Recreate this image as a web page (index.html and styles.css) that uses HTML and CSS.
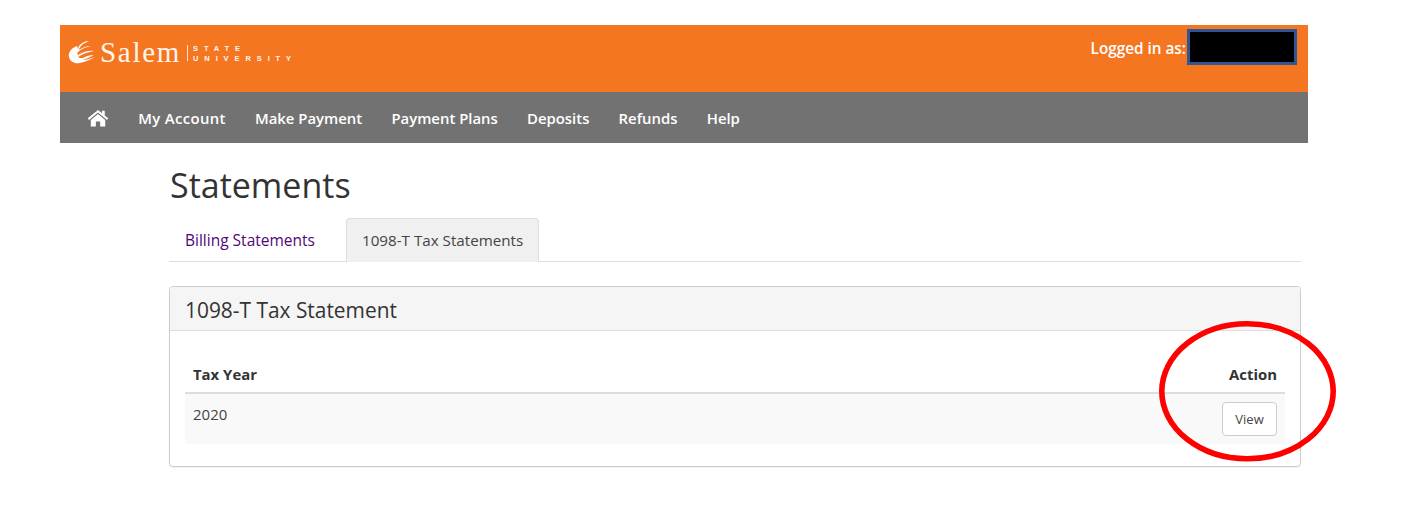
FILE: index.html
```html
<!DOCTYPE html>
<html lang="en">
<head>
<meta charset="utf-8">
<title>Statements</title>
<link rel="stylesheet" href="styles.css">
</head>
<body>
<div class="shell">
  <header class="brandbar">
    <div class="logo">
      <svg class="logo-mark" viewBox="0 0 28 26" aria-hidden="true">
        <path d="M9 7C3 9 0 14 1 18c1 5 6 7 11 6 5-1 10-3 15-6-4 1-8 3-12 3 3-1 7-3 11-5-4 0-8 1-11 3-2 0-4 0-5-1 4-3 10-5 16-6-5-1-11 1-16 4-1-1-1-2 0-3 3-3 8-5 13-6-5 0-9 2-12 4 0-2 2-4 4-6l6-3c-4 0-8 2-10 5-1 1 0 2-1 3z" fill="#fff"/>
      </svg>
      <span class="logo-name">Salem</span>
      <span class="logo-rule"></span>
      <span class="logo-sub"><span>STATE</span><span>UNIVERSITY</span></span>
    </div>
    <div class="login">
      <span>Logged in as:</span>
      <span class="redaction"></span>
    </div>
  </header>
  <nav class="navbar">
    <a class="nav-home" href="#" aria-label="Home">
      <svg viewBox="0 0 24 20" aria-hidden="true">
        <path d="M12 1.2 0.6 10.4l1.4 1.7L12 4l10 8.100 1.400-1.700L19.500 7.200V2h-3v2.800z" fill="#fff"/>
        <path d="M12 5.600 4 12.100V19.500h5.600v-5.500h4.800v5.500H20v-7.400z" fill="#fff"/>
      </svg>
    </a>
    <a class="nav-account" href="#">My Account</a>
    <a href="#">Make Payment</a>
    <a href="#">Payment Plans</a>
    <a href="#">Deposits</a>
    <a href="#">Refunds</a>
    <a href="#">Help</a>
  </nav>
</div>
<main class="content">
  <h1>Statements</h1>
  <ul class="tabs">
    <li><a href="#">Billing Statements</a></li>
    <li class="active"><a href="#">1098-T Tax Statements</a></li>
  </ul>
  <section class="panel">
    <h2 class="panel-title">1098-T Tax Statement</h2>
    <div class="panel-body">
      <table>
        <thead>
          <tr><th>Tax Year</th><th class="right">Action</th></tr>
        </thead>
        <tbody>
          <tr><td>2020</td><td class="right"><button type="button">View</button></td></tr>
        </tbody>
      </table>
    </div>
  </section>
</main>
<svg class="annotation" viewBox="0 0 180 144" aria-hidden="true">
  <ellipse cx="89.500" cy="71.300" rx="85.700" ry="67.500" fill="none" stroke="#f00" stroke-width="5.600"/>
</svg>
</body>
</html>
```
FILE: styles.css
```css
* { box-sizing: border-box; }
html, body { margin: 0; padding: 0; }
body {
  position: relative;
  height: 526px;
  overflow: hidden;
  background: #fff;
  color: #333;
  font-family: "Open Sans", "Noto Sans", "Liberation Sans", sans-serif;
  font-size: 14px;
}
a { text-decoration: none; color: inherit; }
.shell { margin: 25px 96px 0 60px; }
.brandbar {
  height: 67px;
  background: #f57621;
  display: flex;
  justify-content: space-between;
  align-items: flex-start;
  color: #fff;
}
.logo { display: flex; align-items: center; padding: 12px 0 0 8px; }
.logo-mark { width: 28px; height: 26px; }
.logo-name {
  font-family: "Liberation Serif", serif;
  font-size: 29px;
  letter-spacing: 1.700px;
  line-height: 30px;
  margin-left: 4px;
  color: #fff6ee;
}
.logo-rule { width: 1px; height: 16px; background: #fde3d0; margin: 2px 0 0 6px; }
.logo-sub {
  display: flex;
  flex-direction: column;
  font-family: "Liberation Sans", sans-serif;
  font-weight: 700;
  font-size: 7.500px;
  line-height: 10px;
  letter-spacing: 5.900px;
  padding-top: 3px;
  margin-left: 5px;
  color: #fff6ee;
}
.login {
  display: flex;
  align-items: flex-start;
  margin: 7px 11px 0 0;
  font-size: 15.300px;
  font-weight: 600;
  line-height: 32px;
}
.redaction {
  width: 110px;
  height: 36px;
  margin: -3px 0 0 1px;
  background: #000;
  border: 3px solid #2f5597;
}
.navbar {
  height: 51px;
  background: #727273;
  display: flex;
  align-items: center;
  padding-left: 27px;
  gap: 29.200px;
  color: #fff;
  font-size: 14.900px;
  font-weight: 600;
  white-space: nowrap;
}
.nav-home { display: flex; }
.nav-home svg { width: 22px; height: 18px; }
.nav-account { letter-spacing: 0.350px; }
.content { margin: 0 103px 0 169px; }
h1 {
  margin: 20px 0 0;
  padding-left: 1px;
  font-size: 34px;
  font-weight: 500;
  line-height: 44px;
}
.tabs {
  list-style: none;
  display: flex;
  margin: 11px 0 0;
  padding: 0;
  height: 44px;
  border-bottom: 1px solid #ddd;
  font-size: 15.500px;
}
.tabs a {
  display: block;
  height: 44px;
  padding: 0 15px;
  line-height: 43px;
  white-space: nowrap;
  border: 1px solid transparent;
  border-bottom: 0;
  border-radius: 4px 4px 0 0;
  color: #500778;
  font-weight: 500;
}
.tabs li:first-child { margin-right: 15px; }
.tabs .active a { background: #f0f0f0; border-color: #ddd; color: #444; font-size: 15.200px; font-weight: 400; }
.panel {
  margin-top: 24px;
  height: 181px;
  border: 1px solid #ccc;
  border-radius: 4px;
  box-shadow: 0 1px 1px rgba(0,0,0,.05);
}
.panel-title {
  margin: 0;
  height: 44px;
  padding: 0 15px;
  background: #f5f5f5;
  border-bottom: 1px solid #ddd;
  border-radius: 3px 3px 0 0;
  font-size: 20.900px;
  font-weight: 500;
  line-height: 46px;
}
.panel-body { padding: 20px 15px; }
table { width: 100%; border-collapse: collapse; }
th {
  height: 42px;
  padding: 4px 8px 0;
  text-align: left;
  font-weight: 700;
  font-size: 14.900px;
  border-bottom: 2px solid #ddd;
}
td {
  height: 51px;
  padding: 0 8px 10px;
  background: #f9f9f9;
  vertical-align: middle;
  font-size: 15px;
  color: #444;
}
td.right { padding: 0 8px; }
th.right, td.right { text-align: right; }
button {
  height: 34px;
  width: 55px;
  padding: 0;
  background: #fff;
  border: 1px solid #ccc;
  border-radius: 4px;
  color: #444;
  font: inherit;
  font-size: 13px;
  vertical-align: middle;
}
.annotation {
  position: absolute;
  left: 1158px;
  top: 320px;
  width: 180px;
  height: 144px;
}
```
